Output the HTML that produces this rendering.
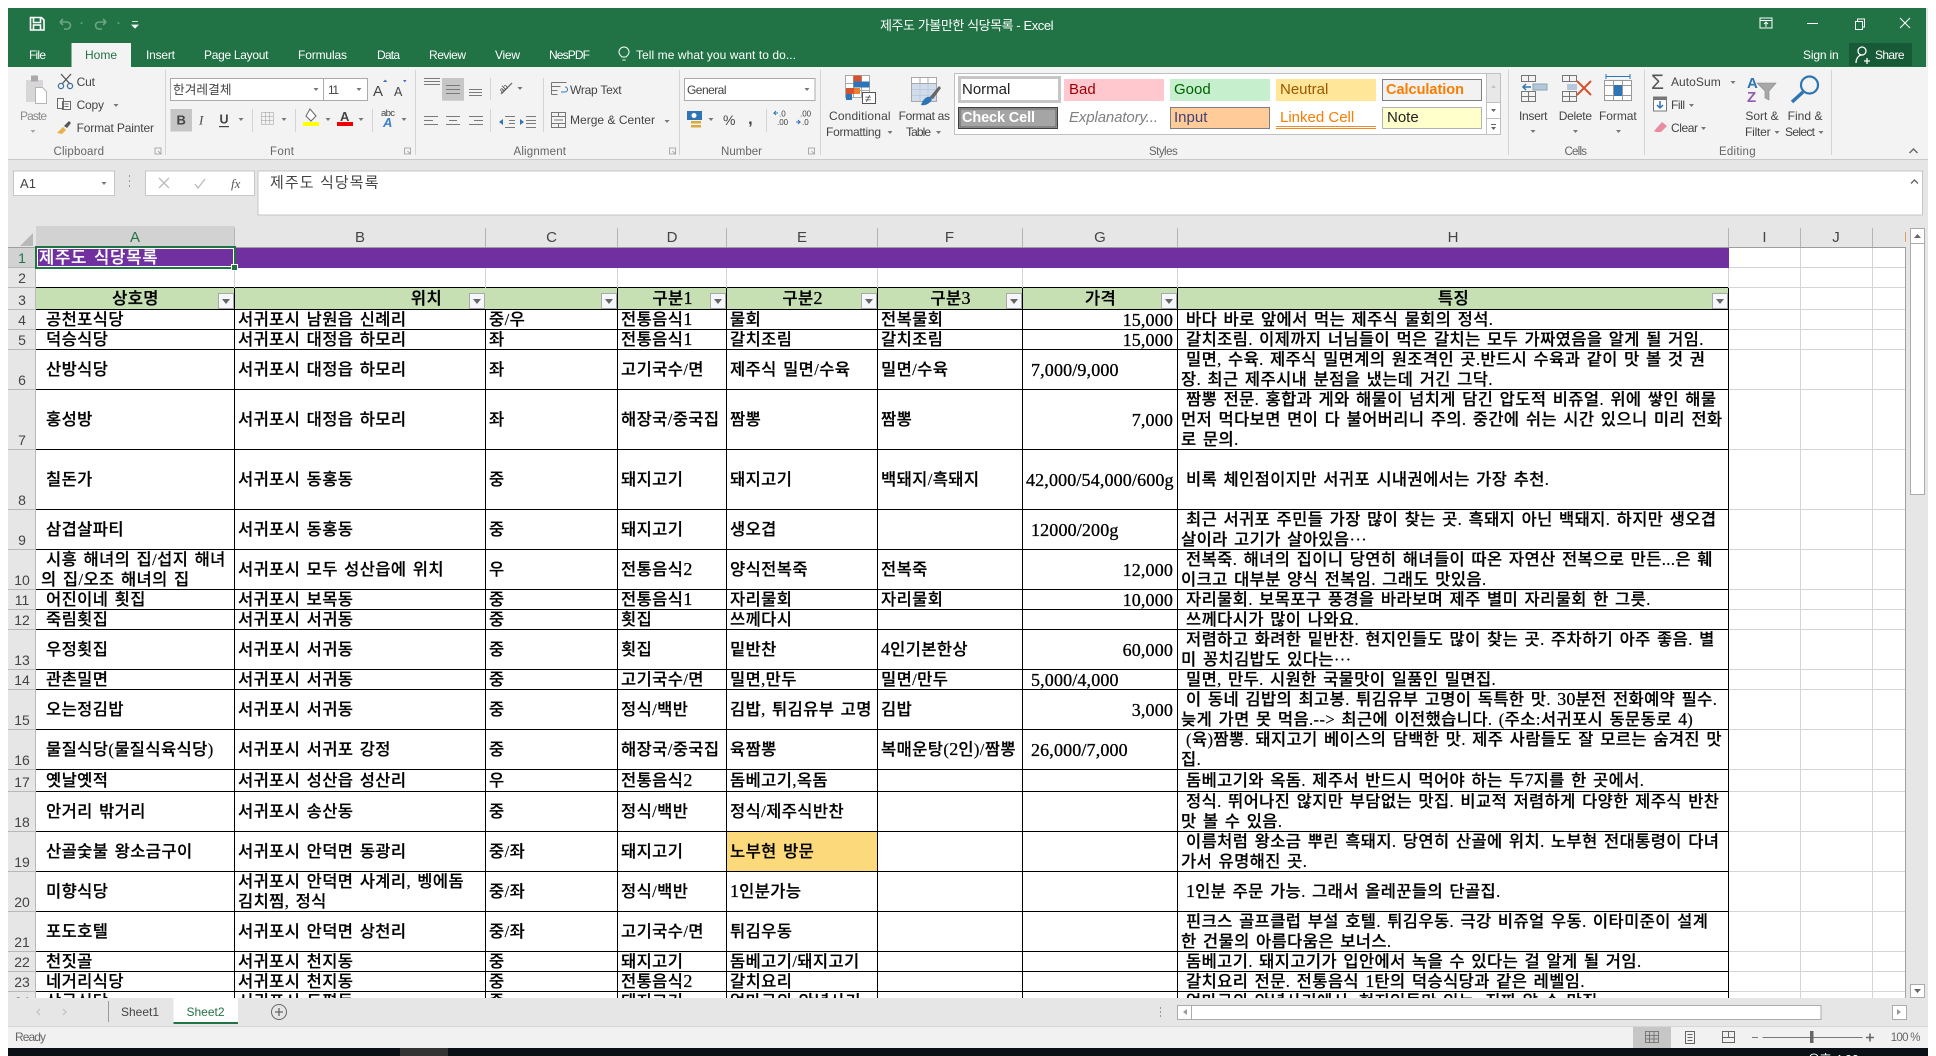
<!DOCTYPE html>
<html lang="ko"><head><meta charset="utf-8"><title>제주도 가볼만한 식당목록 - Excel</title>
<style>
html,body{margin:0;padding:0;background:#fff;width:1936px;height:1056px;overflow:hidden}
svg{position:absolute;left:0;top:0;font-family:"Liberation Sans","Noto Sans CJK KR",sans-serif}
svg text{font-size:12px;fill:#444}
svg .w{fill:#fff}
svg .g{fill:#666}
#grid{position:absolute;left:8px;top:248px;width:1898px;height:750px;overflow:hidden}
table{table-layout:fixed;border-collapse:separate;border-spacing:0;width:1898px;font-family:"Liberation Serif","Noto Sans CJK KR",sans-serif;font-size:16.5px;letter-spacing:.4px;word-spacing:1.8px;line-height:20px;color:#000;font-weight:500;-webkit-text-stroke:.2px #000}
u{text-decoration:none;font-size:18px;line-height:0;letter-spacing:.1px;-webkit-text-stroke:.3px #000}
th{font:14px/20px "Liberation Sans",sans-serif;letter-spacing:0;word-spacing:0;color:#444;background:#e6e6e6;vertical-align:bottom;padding:0;-webkit-text-stroke:0;box-shadow:inset -1px -1px 0 #b8b8b8}
td{padding:0;white-space:nowrap;overflow:hidden;vertical-align:middle;background:#fff;box-shadow:inset -1px -1px 0 #000;position:relative}
td:nth-child(2){padding-left:5px;text-indent:5px}
td:nth-child(3),td:nth-child(4),td:nth-child(5),td:nth-child(6),td:nth-child(7){padding-left:3px}
td:nth-child(8){text-align:right;padding-right:5px;font-size:18px;letter-spacing:.15px;word-spacing:0;-webkit-text-stroke:.3px #000}
td:nth-child(9){padding-left:3px;text-indent:5px}
td:nth-child(n+10){box-shadow:inset -1px -1px 0 #d4d4d4}
td:nth-child(12){box-shadow:inset -1px 0 0 #a0a0a0,inset 0 -1px 0 #d4d4d4}
tr.a{height:20px}tr.b{height:40px}tr.c{height:60px}tr.d{height:22px}
td.l{text-align:left!important;padding-left:8px!important}
td.ll{text-align:left!important;padding-left:3px!important}
tr.r1 td.p{background:#7030a0;box-shadow:none;color:#fff;-webkit-text-stroke:.2px #fff;padding-left:3px;text-indent:0;letter-spacing:.9px;font-size:16.5px;text-align:left}
tr.r1 td.q{padding:0;text-indent:0;box-shadow:inset -1px -1px 0 #d4d4d4}
tr.r1 td.q:last-child{box-shadow:inset -1px 0 0 #a0a0a0,inset 0 -1px 0 #d4d4d4}
tr.r1 th{background:#d2d2d2;color:#217346}
tr.r2 td{box-shadow:inset -1px 0 0 #d4d4d4,inset 0 -1px 0 #000}
tr.r2 td:nth-child(n+10){box-shadow:inset -1px -1px 0 #d4d4d4}
tr.r2 td:nth-child(12){box-shadow:inset -1px 0 0 #a0a0a0,inset 0 -1px 0 #d4d4d4}
tr.h td.t{background:#c6e0b4;text-align:center;padding:0;text-indent:0;font-size:16.5px;letter-spacing:.4px;-webkit-text-stroke:.3px #000}
tr.h td:not(.t){padding:0;text-indent:0}
tr.h td.q{box-shadow:inset -1px -1px 0 #d4d4d4}
tr.h td.q:last-child{box-shadow:inset -1px 0 0 #a0a0a0,inset 0 -1px 0 #d4d4d4}
i.f{position:absolute;right:1px;bottom:1px;width:14px;height:14px;border:1px solid #a8a8a8;background:#f5f7fb;display:block}
i.f:after{content:"";position:absolute;left:3px;top:5px;border:4px solid transparent;border-top:5px solid #666;border-bottom:0}
td.y{background:#fcd97a}
#sel{position:absolute;left:35px;top:246px;width:197px;height:19px;border:2px solid #217346;outline:1px solid transparent;box-shadow:inset 0 0 0 1px #fff}
#hd{position:absolute;left:231px;top:264px;width:5px;height:5px;background:#217346;border:1px solid #fff}
</style></head><body>
<svg width="1936" height="1056" viewBox="0 0 1936 1056">
<rect x="8" y="8" width="1920" height="1040" fill="#e6e6e6"/>
<rect x="8" y="8" width="1918" height="59" fill="#217346"/>
<rect x="8" y="67" width="1920" height="92" fill="#f3f3f3"/>
<rect x="8" y="159" width="1920" height="1" fill="#c9c9c9"/>
<rect x="71.5" y="43" width="59.5" height="24" fill="#f3f3f3"/>

<path d="M30.5 17.5h11l2.5 2.5v10h-13.500zM33.500 17.500v5h7v-5M33.500 30v-5h7v5" fill="none" stroke="#fff" stroke-width="1.600"/>
<path d="M60 22l3-3M60 22l3 3M60 22h7a3.500 3.500 0 0 1 0 7h-3" fill="none" stroke="#6ea486" stroke-width="1.600"/>
<path d="M80 22.500h3l-1.500 2zM117 22.500h3l-1.500 2z" fill="#6ea486"/>
<path d="M106 22l-3-3M106 22l-3 3M106 22h-7a3.500 3.500 0 0 0 0 7h3" fill="none" stroke="#6ea486" stroke-width="1.600"/>
<path d="M132 21.500h6M132 25h6l-3 3z" fill="#fff" stroke="#fff" stroke-width=".8"/>

<text class="w" x="880" y="30" textLength="173.500" style="font-size:13px">제주도 가볼만한 식당목록 - Excel</text>
<rect x="1760" y="18" width="12" height="10" fill="none" stroke="#fff"/><path d="M1760 20.500h12M1766 27v-5M1764 24l2-2 2 2" fill="none" stroke="#fff"/>
<path d="M1807 23.500h11" stroke="#fff" fill="none"/>
<path d="M1855.500 21.500h7v8h-7zM1857.500 21.500v-2.500h7v8h-2" fill="none" stroke="#fff"/>
<path d="M1900 18l10 10M1910 18l-10 10" stroke="#fff" fill="none"/>

<text class="w" x="29" y="59" textLength="17">File</text>
<text x="85" y="59" textLength="32" style="fill:#217346">Home</text>
<text class="w" x="146" y="59" textLength="29">Insert</text>
<text class="w" x="204" y="59" textLength="64.500">Page Layout</text>
<text class="w" x="298" y="59" textLength="49">Formulas</text>
<text class="w" x="377" y="59" textLength="23">Data</text>
<text class="w" x="429" y="59" textLength="37">Review</text>
<text class="w" x="495" y="59" textLength="25">View</text>
<text class="w" x="549" y="59" textLength="41">NesPDF</text>
<path d="M622 57c-2-2-3-3-3-5a5 5 0 0 1 10 0c0 2-1 3-3 5zM622.500 60h3" fill="none" stroke="#fff"/>
<text class="w" x="636" y="59" textLength="160">Tell me what you want to do...</text>
<text class="w" x="1803" y="59" textLength="35.700">Sign in</text>
<rect x="1849" y="43" width="63" height="23" fill="#175a37"/>
<circle cx="1862" cy="51" r="4" fill="none" stroke="#fff" stroke-width="1.300"/><path d="M1856 63c0-5 3-8 6-8M1864 61h6M1867 58v6" fill="none" stroke="#fff" stroke-width="1.300"/>
<text class="w" x="1875" y="59" textLength="29.500">Share</text>

<path d="M165.500 70v85M415.500 70v85M679.500 70v85M820.500 70v85M1508.500 70v85M1644.500 70v85M1831.500 70v85M252.500 109v23M295.500 109v23M372.500 109v23M490.500 78v22M490.500 109v23M543.500 78v54M766.500 109v23" stroke="#d4d4d4" fill="none"/>
<g><text x="53.500" y="155" textLength="50.500" class="g" style="font-size:11.500px">Clipboard</text>
<text x="270" y="155" textLength="24" class="g" style="font-size:11.500px">Font</text>
<text x="513.500" y="155" textLength="52.500" class="g" style="font-size:11.500px">Alignment</text>
<text x="721" y="155" textLength="41" class="g" style="font-size:11.500px">Number</text>
<text x="1149" y="155" textLength="28.700" class="g" style="font-size:11.500px">Styles</text>
<text x="1564.500" y="155" textLength="22.500" class="g" style="font-size:11.500px">Cells</text>
<text x="1719" y="155" textLength="36.600" class="g" style="font-size:11.500px">Editing</text></g>
<path d="M155 148h6v6h-6zM158 151l2.500 2.500M404.500 148h6v6h-6zM407.500 151l2.500 2.500M669.500 148h6v6h-6zM672.500 151l2.500 2.500M808.500 148h6v6h-6zM811.500 151l2.500 2.500" fill="none" stroke="#999" stroke-width=".8"/>

<rect x="26" y="80" width="17" height="22" fill="#d8d6d8"/><rect x="31" y="75.500" width="7" height="6" fill="#aaa"/>
<path d="M35.500 87.500h7l4 4v12h-11z" fill="#fff" stroke="#b4b4b4"/>
<text x="20" y="120" textLength="27" style="fill:#8a8a8a">Paste</text>
<path d="M61 74l9 10M71 74l-9 10" stroke="#555" stroke-width="1.300" fill="none"/><circle cx="61" cy="86" r="2.600" fill="none" stroke="#3f6f9e" stroke-width="1.300"/><circle cx="70" cy="86" r="2.600" fill="none" stroke="#3f6f9e" stroke-width="1.300"/>
<text x="76.600" y="86" textLength="18.400">Cut</text>
<path d="M57.500 98.500h6v10h-6zM62.500 101.500h8v8h-8zM64.500 104h4M64.500 106.500h4" fill="#f8f8f8" stroke="#6b6b6b"/>
<text x="76.600" y="109" textLength="27.400">Copy</text>
<path d="M57 133l6-6 3 3-4 4z" fill="#e9b04d"/><path d="M64 126l5-5 2 2-4 5z" fill="#555"/>
<text x="76.600" y="132" textLength="77.400">Format Painter</text>

<rect x="170.500" y="78.500" width="153" height="22" fill="#fff" stroke="#ababab"/><rect x="323.500" y="78.500" width="44" height="22" fill="#fff" stroke="#ababab"/>
<text x="173" y="94" textLength="58.500" style="font-size:12.700px">한겨레결체</text>
<text x="328" y="94" textLength="11">11</text>
<text x="373" y="96" style="font-size:15px">A</text><text x="394" y="96" style="font-size:12.500px">A</text>
<path d="M383 82l2.200-2.500 2.200 2.500zM403 80l1.800 2.500 1.800-2.500z" fill="#4472c4"/>
<rect x="170.500" y="109" width="21.500" height="22.500" fill="#c6c6c6"/>
<text x="176.500" y="124.500" style="font-weight:700;font-size:13px">B</text>
<text x="199" y="124.500" style="font:italic 13px 'Liberation Serif'">I</text>
<text x="219.500" y="123.500" style="font-weight:700;font-size:12.500px">U</text><rect x="219" y="126" width="10" height="1.200" fill="#444"/>
<path d="M261.500 112.500h12v12h-12zM265.500 112.500v12M269.500 112.500v12M261.500 116.500h12M261.500 120.500h12" fill="none" stroke="#9a9a9a" stroke-dasharray="1 1"/>
<path d="M310 109l6 7-5 5-5-5z" fill="#fff" stroke="#666"/><rect x="303" y="122" width="16" height="4" fill="#ff0"/>
<text x="340" y="121" style="font-weight:700;font-size:13px">A</text><rect x="337" y="122" width="16" height="4" fill="#e00"/>
<text x="381" y="116" textLength="14" style="font-size:9.500px">abc</text><text x="383" y="127" style="font:italic 700 13px 'Liberation Sans';fill:#3f7fc4">A</text>

<path d="M424 78.500h16M424 81.500h16M424 84.500h16" stroke="#7a7a7a" fill="none"/>
<rect x="442" y="78" width="22" height="22.700" fill="#c6c6c6"/>
<path d="M446 85.500h14M446 89.500h14M446 93.500h14M469 89.500h13M469 92.500h13M469 95.500h13M424 116.500h14M424 120.500h9M424 124.500h14M446 116.500h14M449 120.500h8M446 124.500h14M469 116.500h14M474 120.500h9M469 124.500h14" stroke="#7a7a7a" fill="none"/>
<path d="M501 94l11-11" stroke="#7a7a7a" stroke-width="1.500" fill="none"/><text x="499" y="90" transform="rotate(-45 505 88)" style="font-size:8px">ab</text>
<path d="M505 116.500h10M509 120.500h6M509 123.500h6M505 127.500h10" stroke="#7a7a7a" fill="none"/><path d="M503 119l-4 3 4 3z" fill="#2e75b5"/>
<path d="M526 116.500h10M526 120.500h10M526 123.500h10M526 127.500h10" stroke="#7a7a7a" fill="none"/><path d="M520 119l4 3-4 3z" fill="#2e75b5"/>
<path d="M551.500 82.500h15M551.500 86.500h9M551.500 90.500h6M551.500 94.500h6M551.500 82.500v12" stroke="#777" fill="none"/><path d="M561 92h4a2 2 0 0 0 0-5" fill="none" stroke="#2e75b5"/>
<text x="570" y="94" textLength="51.600">Wrap Text</text>
<path d="M551.500 112.500h14v15h-14zM551.500 116.500h14M551.500 123.500h14M554 120h9M558.500 112.500v4M558.500 123.500v4" stroke="#777" fill="none"/>
<text x="570" y="124" textLength="85">Merge &amp; Center</text>

<rect x="684.500" y="78.500" width="130.500" height="22" fill="#fff" stroke="#ababab"/>
<text x="687" y="94" textLength="39.500">General</text>
<rect x="687" y="111" width="15" height="9" fill="#2e75b5"/><circle cx="694" cy="115.500" r="2.500" fill="#fff"/><rect x="691" y="121" width="10" height="2.500" fill="#d8a83c"/><rect x="691" y="125" width="10" height="2.500" fill="#d8a83c"/>
<text x="723" y="125" textLength="13" style="font-size:14px">%</text>
<text x="748" y="124" style="font-size:17px;font-weight:700">,</text>
<text x="779" y="116.500" style="font-size:8px">.0</text><text x="777" y="125" style="font-size:8px">.00</text><path d="M778 113h-4l2-2M774 113l2 2" stroke="#2e75b5" fill="none"/>
<text x="800" y="116.500" style="font-size:8px">.00</text><text x="802" y="125" style="font-size:8px">.0</text><path d="M796 122h4l-2-2M800 122l-2 2" stroke="#2e75b5" fill="none"/>

<path d="M845.500 75.500h24v22h-24zM853.500 75.500v22M861.500 75.500v22M845.500 83.500h24M845.500 90.500h24" fill="#fff" stroke="#a8a8a8"/>
<rect x="853.500" y="75.500" width="8" height="6" fill="#d35230"/><rect x="853.500" y="81.500" width="16" height="6" fill="#2e75b5"/><rect x="846" y="88" width="8" height="6" fill="#d35230"/><rect x="854" y="88" width="6" height="6" fill="#ed7d31"/><rect x="846" y="94" width="6" height="6" fill="#2e75b5"/>
<rect x="862.500" y="92.500" width="13" height="11" fill="#fff" stroke="#555"/><text x="865" y="102" style="font-size:11px">≠</text>
<text x="829" y="120" textLength="61.600">Conditional</text><text x="826" y="136" textLength="55">Formatting</text>
<path d="M911.500 77.500h25v24h-25zM911.500 83.500h25M911.500 89.500h25M911.500 95.500h25M920 77.500v24M928 77.500v24" fill="#fff" stroke="#a8a8a8"/><rect x="912" y="84" width="24" height="17" fill="#c5d4e8" opacity=".8"/>
<path d="M929 98l10-12 2 2-8 11z" fill="#666"/><path d="M921 105c2-6 6-9 9-8l2 3c-3 4-7 6-11 5z" fill="#2e75b5"/>
<text x="898.600" y="120" textLength="51.400">Format as</text><text x="906" y="136" textLength="25">Table</text>

<rect x="954.500" y="73.500" width="546" height="61" fill="#fff" stroke="#c0c0c0"/>
<path d="M1486.500 73.500v61M1486.500 102.500h14M1486.500 118.500h14" stroke="#c0c0c0" fill="none"/><rect x="1487" y="74" width="13" height="28" fill="#e8e8e8"/>
<path d="M1491 88l2.500-3 2.500 3z" fill="#c4c4c4"/><path d="M1491 109h5l-2.500 3zM1491 127h5l-2.500 3z" fill="#666" stroke="none"/><path d="M1491 124.500h5" stroke="#666"/>
<rect x="959.500" y="77.500" width="100" height="24" fill="#fff" stroke="#c6c6c6" stroke-width="3"/>
<text x="962" y="94" style="font-size:15px;fill:#222">Normal</text>
<rect x="1064" y="79" width="100" height="22" fill="#ffc7ce"/><text x="1069" y="94" style="font-size:15px;fill:#9c0006">Bad</text>
<rect x="1170" y="79" width="100" height="22" fill="#c6efce"/><text x="1174" y="94" style="font-size:15px;fill:#006100">Good</text>
<rect x="1276" y="79" width="100" height="22" fill="#ffe699"/><text x="1280" y="94" style="font-size:15px;fill:#9c5700">Neutral</text>
<rect x="1382.500" y="79.500" width="99" height="21" fill="#f2f2f2" stroke="#7f7f7f"/><text x="1386" y="94" textLength="78" style="font-size:14.500px;font-weight:700;fill:#fa7d00">Calculation</text>
<rect x="958.500" y="107.500" width="99" height="21" fill="#a5a5a5" stroke="#3f3f3f" stroke-width="1"/><rect x="960" y="109" width="96" height="18" fill="none" stroke="#3f3f3f" stroke-width=".6"/><text x="962" y="122" textLength="73" style="font-size:14.500px;font-weight:700;fill:#fff">Check Cell</text>
<text x="1069" y="122" textLength="89" style="font-size:15px;font-style:italic;fill:#7f7f7f">Explanatory...</text>
<rect x="1170.500" y="107.500" width="99" height="21" fill="#fc9" stroke="#7f7f7f"/><text x="1174" y="122" style="font-size:15px;fill:#3f3f76">Input</text>
<text x="1280" y="122" style="font-size:15px;fill:#fa7d00">Linked Cell</text><path d="M1276 126.500h100M1276 128.500h100" stroke="#ed8a2c" fill="none"/>
<rect x="1382.500" y="107.500" width="99" height="21" style="fill:#ffc" stroke="#b2b2b2"/><text x="1387" y="122" style="font-size:15px;fill:#222">Note</text>

<path d="M1521.500 75.500h14v6h-14zM1528.500 75.500v6M1521.500 91.500h14v10h-14zM1528.500 91.500v10M1521.500 96.500h14" fill="none" stroke="#777"/><rect x="1533" y="84" width="14" height="6" fill="#b4c7dc" stroke="#8aa"/><path d="M1531 87h-8M1526 84l-3 3 3 3" fill="none" stroke="#2e75b5" stroke-width="1.500"/>
<text x="1519" y="120" textLength="28.500">Insert</text>
<path d="M1562.500 75.500h14v6h-14zM1569.500 75.500v6M1562.500 91.500h14v10h-14zM1569.500 91.500v10M1562.500 96.500h14" fill="none" stroke="#777"/><rect x="1567" y="84" width="10" height="6" fill="#b4c7dc"/><path d="M1577 81l14 14M1591 81l-14 14" stroke="#d35230" stroke-width="2" fill="none"/>
<text x="1558.800" y="120" textLength="33.200">Delete</text>
<path d="M1604.500 80.500h27v20h-27zM1613.500 80.500v20M1622.500 80.500v20M1604.500 85.500h27M1604.500 95.500h27" fill="#fff" stroke="#999"/><rect x="1614" y="85" width="8" height="11" fill="#2e75b5"/><path d="M1606 76.500h24M1606 74v5M1630 74v5" stroke="#2e75b5" fill="none"/>
<text x="1599" y="120" textLength="37.700">Format</text>
<text x="1651" y="89" style="font-size:21px;fill:#555">Σ</text><text x="1671" y="86" textLength="49.700">AutoSum</text>
<rect x="1653.500" y="97" width="13" height="14" fill="#fff" stroke="#777"/><rect x="1653.500" y="97" width="13" height="3" fill="#777"/><path d="M1660 101v7M1657 105l3 3 3-3" stroke="#2e75b5" stroke-width="1.500" fill="none"/>
<text x="1671" y="109" textLength="14">Fill</text>
<path d="M1654 131l8-9 5 4-6 6h-5z" fill="#e88ca0"/>
<text x="1671" y="132" textLength="27">Clear</text>
<text x="1747" y="88" style="font-size:15px;fill:#2e75b5;font-weight:700">A</text><text x="1747" y="102" style="font-size:15px;fill:#8e5fb0;font-weight:700">Z</text>
<path d="M1757 83h19l-7 8v9l-4-2v-7z" fill="#a8a8a8" stroke="#888" stroke-width=".6"/>
<text x="1745.400" y="120" textLength="33.300">Sort &amp;</text><text x="1745" y="136" textLength="25.600">Filter</text>
<circle cx="1809.500" cy="85" r="8.500" fill="none" stroke="#2e75b5" stroke-width="2.200"/><path d="M1803 92l-11 10" stroke="#2e75b5" stroke-width="3.500" fill="none"/>
<text x="1787.600" y="120" textLength="34.900">Find &amp;</text><text x="1785" y="136" textLength="30">Select</text>
<path d="M1909.500 153l4-4 4 4" fill="none" stroke="#666" stroke-width="1.400"/>
<path d="M313.500 88h5l-2.500 3zM356.500 88h5l-2.500 3zM238.500 118h5l-2.500 3zM281.500 118h5l-2.500 3zM325.500 118h5l-2.500 3zM358.500 118h5l-2.500 3zM401.500 118h5l-2.500 3zM517.500 87h5l-2.500 3zM664.500 120h5l-2.500 3zM804.500 88h5l-2.500 3zM708.500 118h5l-2.500 3zM113.500 104h5l-2.500 3zM887.500 131h5l-2.500 3zM936 131h5l-2.500 3zM1530.500 130h5l-2.500 3zM1573 130h5l-2.500 3zM1616 130h5l-2.500 3zM1730.500 81h5l-2.500 3zM1689 104h5l-2.500 3zM1701 127h5l-2.500 3zM1774.500 131h5l-2.500 3zM1818.500 131h5l-2.500 3z" fill="#777"/>
<path d="M30.500 130h5l-2.500 3z" fill="#aaa"/>

<rect x="13.500" y="171" width="101" height="24.500" fill="#fff" stroke="#c6c6c6"/><text x="20" y="188" textLength="16" style="font-size:13px">A1</text>
<path d="M101.500 182h5l-2.500 3z" fill="#777"/>
<path d="M129.500 175v2M129.500 180v2M129.500 185v2" stroke="#999" fill="none"/>
<rect x="145.500" y="171" width="109" height="24.500" fill="#fff" stroke="#c6c6c6"/>
<path d="M159 178l10 10M169 178l-10 10M195 184l3 4 7-9" stroke="#bbb" stroke-width="1.300" fill="none"/>
<text x="231" y="188" style="font:italic 13px 'Liberation Serif';fill:#555">fx</text>
<rect x="258" y="171" width="1664.500" height="44" fill="#fff" stroke="#c6c6c6"/>
<text x="270" y="187.500" textLength="108.500" style="font-size:15px">제주도 식당목록</text>
<path d="M1911 183.500l3.500-3.500 3.500 3.500" fill="none" stroke="#666" stroke-width="1.400"/>

<rect x="36" y="226" width="199" height="21" fill="#d2d2d2"/>
<path d="M20 246h13v-13z" fill="#b8b8b8"/>
<path d="M234.500 228v19M485.500 228v19M617.500 228v19M726.500 228v19M877.500 228v19M1022.500 228v19M1177.500 228v19M1728.500 228v19M1800.500 228v19M1872.500 228v19" stroke="#b4b4b4" fill="none"/>
<rect x="8" y="247" width="1898" height="1" fill="#9e9e9e"/>
<g text-anchor="middle"><text x="135" y="242" style="font-size:15px;fill:#217346">A</text><text x="360" y="242" style="font-size:15px">B</text><text x="551.500" y="242" style="font-size:15px">C</text><text x="672" y="242" style="font-size:15px">D</text><text x="802" y="242" style="font-size:15px">E</text><text x="949.500" y="242" style="font-size:15px">F</text><text x="1100" y="242" style="font-size:15px">G</text><text x="1453" y="242" style="font-size:15px">H</text><text x="1764.500" y="242" style="font-size:15px">I</text><text x="1836" y="242" style="font-size:15px">J</text></g>
<rect x="1905" y="232" width="1" height="10" fill="#e0a060"/>

<rect x="1910.500" y="228.500" width="14" height="15" fill="#fff" stroke="#ababab"/><path d="M1914 238l3.500-4 3.500 4z" fill="#666"/>
<rect x="1910.500" y="243.500" width="14" height="251" fill="#fff" stroke="#ababab"/>
<rect x="1910.500" y="984.500" width="14" height="13" fill="#fff" stroke="#ababab"/><path d="M1914 989h7l-3.500 4z" fill="#666"/>

<path d="M108.500 1001v21" stroke="#999" fill="none"/>
<path d="M40 1009l-3 3 3 3M63 1009l3 3-3 3" stroke="#c0c0c0" fill="none" stroke-width="1.200"/>
<text x="121" y="1016" textLength="38">Sheet1</text>
<rect x="173.500" y="998" width="64.500" height="26" fill="#fff"/><rect x="173.500" y="1022" width="64.500" height="2" fill="#217346"/>
<text x="186.500" y="1016" textLength="38" style="fill:#217346">Sheet2</text>
<circle cx="279" cy="1012" r="7.500" fill="none" stroke="#666"/><path d="M275 1012h8M279 1008v8" stroke="#666" stroke-width="1.300" fill="none"/>
<path d="M1160.500 1007v2M1160.500 1011v2M1160.500 1015v2" stroke="#999" fill="none"/>
<rect x="1177.500" y="1005.500" width="14" height="14" fill="#fff" stroke="#ababab"/><path d="M1187 1009v6l-4-3z" fill="#999"/>
<rect x="1191.500" y="1005.500" width="629.500" height="14" fill="#fff" stroke="#ababab"/>
<rect x="1892.500" y="1005.500" width="14" height="14" fill="#fff" stroke="#ababab"/><path d="M1897 1009v6l4-3z" fill="#999"/>

<rect x="8" y="1027" width="1920" height="21" fill="#f1f1f1"/>
<rect x="8" y="1026" width="1920" height="1" fill="#d6d6d6"/>
<text x="15" y="1041" textLength="31" class="g">Ready</text>
<rect x="1633" y="1027" width="38" height="21" fill="#c6c6c6"/>
<path d="M1645.500 1031.500h13v11h-13zM1645.500 1035.500h13M1645.500 1039h13M1649.500 1031.500v11M1654 1031.500v11" stroke="#666" fill="none" stroke-width=".8"/>
<path d="M1685.500 1031.500h9v12h-9zM1687.500 1034.500h5M1687.500 1037.500h5M1687.500 1040.500h5" stroke="#666" fill="none"/>
<path d="M1722.500 1031.500h12v11h-12zM1728.500 1031.500v6M1722.500 1037.500h12" stroke="#666" fill="none"/>
<path d="M1752 1037.500h6M1762.500 1037.500h100" stroke="#777" fill="none"/>
<rect x="1810" y="1031" width="3.500" height="12" fill="#666"/>
<path d="M1866 1037.500h8M1870 1033.500v8" stroke="#666" stroke-width="1.600" fill="none"/>
<text x="1890.700" y="1041" textLength="29.800" class="g" style="font-size:11.500px">100 %</text>

<rect x="8" y="1048" width="1920" height="8" fill="#0b1016"/>
<rect x="400" y="1048" width="48" height="8" fill="#333"/>
<text x="1808" y="1064" textLength="51" class="w" style="font-size:13px">오후 4:00</text>
</svg>

<div id="grid"><table>
<colgroup><col style="width:28px"><col style="width:199px"><col style="width:251px"><col style="width:132px"><col style="width:109px"><col style="width:151px"><col style="width:145px"><col style="width:155px"><col style="width:551px"><col style="width:72px"><col style="width:72px"><col style="width:33px"></colgroup>
<tr class="a r1"><th>1</th><td class="p" colspan="8">제주도 식당목록</td><td class="q"></td><td class="q"></td><td class="q"></td></tr>
<tr class="a r2"><th>2</th><td></td><td></td><td></td><td></td><td></td><td></td><td></td><td></td><td></td><td></td><td></td></tr>
<tr class="d h"><th>3</th><td class="t">상호명<i class="f"></i></td><td class="t" colspan="2">위치<i class="f" style="right:133px"></i><i class="f"></i></td><td class="t">구분<u>1</u><i class="f"></i></td><td class="t">구분<u>2</u><i class="f"></i></td><td class="t">구분<u>3</u><i class="f"></i></td><td class="t">가격<i class="f"></i></td><td class="t">특징<i class="f"></i></td><td class="q"></td><td class="q"></td><td class="q"></td></tr>
<tr class="a"><th>4</th><td>공천포식당</td><td>서귀포시 남원읍 신례리</td><td>중/우</td><td>전통음식<u>1</u></td><td>물회</td><td>전복물회</td><td>15,000</td><td>바다 바로 앞에서 먹는 제주식 물회의 정석.</td><td></td><td></td><td></td></tr>
<tr class="a"><th>5</th><td>덕승식당</td><td>서귀포시 대정읍 하모리</td><td>좌</td><td>전통음식<u>1</u></td><td>갈치조림</td><td>갈치조림</td><td>15,000</td><td>갈치조림. 이제까지 너님들이 먹은 갈치는 모두 가짜였음을 알게 될 거임.</td><td></td><td></td><td></td></tr>
<tr class="b"><th>6</th><td>산방식당</td><td>서귀포시 대정읍 하모리</td><td>좌</td><td>고기국수/면</td><td>제주식 밀면/수육</td><td>밀면/수육</td><td class="l">7,000/9,000</td><td>밀면, 수육. 제주식 밀면계의 원조격인 곳.반드시 수육과 같이 맛 볼 것 권<br>장. 최근 제주시내 분점을 냈는데 거긴 그닥.</td><td></td><td></td><td></td></tr>
<tr class="c"><th>7</th><td>홍성방</td><td>서귀포시 대정읍 하모리</td><td>좌</td><td>해장국/중국집</td><td>짬뽕</td><td>짬뽕</td><td>7,000</td><td>짬뽕 전문. 홍합과 게와 해물이 넘치게 담긴 압도적 비쥬얼. 위에 쌓인 해물<br>먼저 먹다보면 면이 다 불어버리니 주의. 중간에 쉬는 시간 있으니 미리 전화<br>로 문의.</td><td></td><td></td><td></td></tr>
<tr class="c"><th>8</th><td>칠돈가</td><td>서귀포시 동홍동</td><td>중</td><td>돼지고기</td><td>돼지고기</td><td>백돼지/흑돼지</td><td class="ll">42,000/54,000/600g</td><td>비록 체인점이지만 서귀포 시내권에서는 가장 추천.</td><td></td><td></td><td></td></tr>
<tr class="b"><th>9</th><td>삼겹살파티</td><td>서귀포시 동홍동</td><td>중</td><td>돼지고기</td><td>생오겹</td><td></td><td class="l">12000/200g</td><td>최근 서귀포 주민들 가장 많이 찾는 곳. 흑돼지 아닌 백돼지. 하지만 생오겹<br>살이라 고기가 살아있음···</td><td></td><td></td><td></td></tr>
<tr class="b"><th>10</th><td>시흥 해녀의 집/섭지 해녀<br>의 집/오조 해녀의 집</td><td>서귀포시 모두 성산읍에 위치</td><td>우</td><td>전통음식<u>2</u></td><td>양식전복죽</td><td>전복죽</td><td>12,000</td><td>전복죽. 해녀의 집이니 당연히 해녀들이 따온 자연산 전복으로 만든...은 훼<br>이크고 대부분 양식 전복임. 그래도 맛있음.</td><td></td><td></td><td></td></tr>
<tr class="a"><th>11</th><td>어진이네 횟집</td><td>서귀포시 보목동</td><td>중</td><td>전통음식<u>1</u></td><td>자리물회</td><td>자리물회</td><td>10,000</td><td>자리물회. 보목포구 풍경을 바라보며 제주 별미 자리물회 한 그릇.</td><td></td><td></td><td></td></tr>
<tr class="a"><th>12</th><td>죽림횟집</td><td>서귀포시 서귀동</td><td>중</td><td>횟집</td><td>쓰께다시</td><td></td><td></td><td>쓰께다시가 많이 나와요.</td><td></td><td></td><td></td></tr>
<tr class="b"><th>13</th><td>우정횟집</td><td>서귀포시 서귀동</td><td>중</td><td>횟집</td><td>밑반찬</td><td><u>4</u>인기본한상</td><td>60,000</td><td>저렴하고 화려한 밑반찬. 현지인들도 많이 찾는 곳. 주차하기 아주 좋음. 별<br>미 꽁치김밥도 있다는···</td><td></td><td></td><td></td></tr>
<tr class="a"><th>14</th><td>관촌밀면</td><td>서귀포시 서귀동</td><td>중</td><td>고기국수/면</td><td>밀면,만두</td><td>밀면/만두</td><td class="l">5,000/4,000</td><td>밀면, 만두. 시원한 국물맛이 일품인 밀면집.</td><td></td><td></td><td></td></tr>
<tr class="b"><th>15</th><td>오는정김밥</td><td>서귀포시 서귀동</td><td>중</td><td>정식/백반</td><td>김밥, 튀김유부 고명</td><td>김밥</td><td>3,000</td><td>이 동네 김밥의 최고봉. 튀김유부 고명이 독특한 맛. <u>30</u>분전 전화예약 필수.<br>늦게 가면 못 먹음.--&gt; 최근에 이전했습니다. (주소:서귀포시 동문동로 <u>4</u>)</td><td></td><td></td><td></td></tr>
<tr class="b"><th>16</th><td>물질식당(물질식육식당)</td><td>서귀포시 서귀포 강정</td><td>중</td><td>해장국/중국집</td><td>육짬뽕</td><td>복매운탕(<u>2</u>인)/짬뽕</td><td class="l">26,000/7,000</td><td>(육)짬뽕. 돼지고기 베이스의 담백한 맛. 제주 사람들도 잘 모르는 숨겨진 맛<br>집.</td><td></td><td></td><td></td></tr>
<tr class="d"><th>17</th><td>옛날옛적</td><td>서귀포시 성산읍 성산리</td><td>우</td><td>전통음식<u>2</u></td><td>돔베고기,옥돔</td><td></td><td></td><td>돔베고기와 옥돔. 제주서 반드시 먹어야 하는 두<u>7</u>지를 한 곳에서.</td><td></td><td></td><td></td></tr>
<tr class="b"><th>18</th><td>안거리 밖거리</td><td>서귀포시 송산동</td><td>중</td><td>정식/백반</td><td>정식/제주식반찬</td><td></td><td></td><td>정식. 뛰어나진 않지만 부담없는 맛집. 비교적 저렴하게 다양한 제주식 반찬<br>맛 볼 수 있음.</td><td></td><td></td><td></td></tr>
<tr class="b"><th>19</th><td>산골숯불 왕소금구이</td><td>서귀포시 안덕면 동광리</td><td>중/좌</td><td>돼지고기</td><td class="y">노부현 방문</td><td></td><td></td><td>이름처럼 왕소금 뿌린 흑돼지. 당연히 산골에 위치. 노부현 전대통령이 다녀<br>가서 유명해진 곳.</td><td></td><td></td><td></td></tr>
<tr class="b"><th>20</th><td>미향식당</td><td>서귀포시 안덕면 사계리, 벵에돔<br>김치찜, 정식</td><td>중/좌</td><td>정식/백반</td><td><u>1</u>인분가능</td><td></td><td></td><td><u>1</u>인분 주문 가능. 그래서 올레꾼들의 단골집.</td><td></td><td></td><td></td></tr>
<tr class="b"><th>21</th><td>포도호텔</td><td>서귀포시 안덕면 상천리</td><td>중/좌</td><td>고기국수/면</td><td>튀김우동</td><td></td><td></td><td>핀크스 골프클럽 부설 호텔. 튀김우동. 극강 비쥬얼 우동. 이타미준이 설계<br>한 건물의 아름다움은 보너스.</td><td></td><td></td><td></td></tr>
<tr class="a"><th>22</th><td>천짓골</td><td>서귀포시 천지동</td><td>중</td><td>돼지고기</td><td>돔베고기/돼지고기</td><td></td><td></td><td>돔베고기. 돼지고기가 입안에서 녹을 수 있다는 걸 알게 될 거임.</td><td></td><td></td><td></td></tr>
<tr class="a"><th>23</th><td>네거리식당</td><td>서귀포시 천지동</td><td>중</td><td>전통음식<u>2</u></td><td>갈치요리</td><td></td><td></td><td>갈치요리 전문. 전통음식 <u>1</u>탄의 덕승식당과 같은 레벨임.</td><td></td><td></td><td></td></tr>
<tr class="a"><th>24</th><td>상국식당</td><td>서귀포시 도평동</td><td>중</td><td>돼지고기</td><td>얼마군의 안녕사기</td><td></td><td></td><td>얼마군의 안녕사기에서. 현지인들만 있는. 진짜 알 수 맛집.</td><td></td><td></td><td></td></tr>
</table></div>
<div id="sel"></div><div id="hd"></div>
</body></html>
